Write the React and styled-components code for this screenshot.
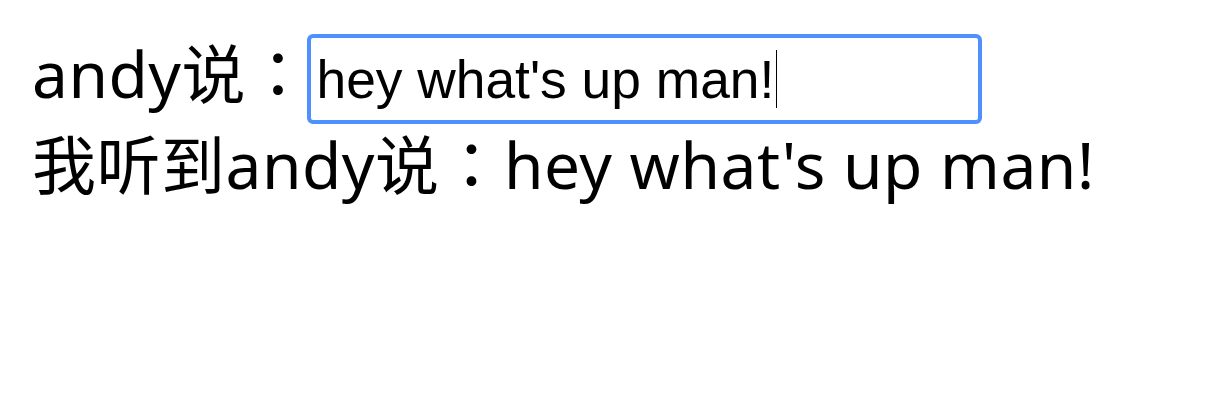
import React, { useState } from "react";
import styled, { createGlobalStyle } from "styled-components";

const GlobalStyle = createGlobalStyle`
body {
    margin: 0;
    background: #fff;
}
`;

function App() {
    const [message] = useState("hey what's up man!");

    return (
    <Page>
        <GlobalStyle/>
        <Line>
            andy说：<TextBox role="textbox">{message}<Caret/></TextBox>
        </Line>
        <Line>我听到andy说：{message}</Line>
    </Page>
    );
};

const Page = styled.div `
padding: 33px 32px;
font-family: "Noto Sans", "Noto Sans CJK TC", sans-serif;
font-size: 64px;
line-height: 82px;
letter-spacing: 0.5px;
color: #000;
`;

const Line = styled.div `
white-space: nowrap;
`;

const TextBox = styled.span `
display: inline-block;
box-sizing: border-box;
width: 675px;
height: 90px;
margin-left: -3px;
padding: 11px 8px 10px 5px;
border: 4px solid #4d90fe;
border-radius: 6px;
font-family: "Liberation Sans", Arial, sans-serif;
font-size: 53.33px;
letter-spacing: 0;
line-height: normal;
vertical-align: baseline;
`;

const Caret = styled.span `
display: inline-block;
width: 1px;
height: 58px;
margin-left: 2px;
background: #000;
vertical-align: -10px;
`;

export default App;
